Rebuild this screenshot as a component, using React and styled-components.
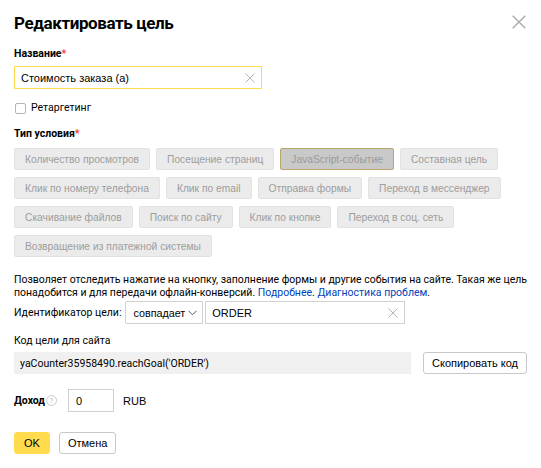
import React from "react";
import styled, { createGlobalStyle } from "styled-components";

const GlobalStyle = createGlobalStyle`
  body {
    margin: 0;
    background: #fff;
    font-family: Roboto, "Noto Sans", sans-serif;
    color: #000;
  }
`;

const Dialog = styled.div`
  position: relative;
  width: 541px;
  height: 468px;
  box-sizing: border-box;
  padding: 12px 14px 0;
`;

const Title = styled.h2`
  margin: 0;
  font-size: 17px;
  line-height: 22px;
  font-weight: 700;
  letter-spacing: -0.4px;
`;

const Close = styled.button`
  position: absolute;
  top: 15px;
  right: 15px;
  width: 14px;
  height: 14px;
  padding: 0;
  border: 0;
  background: none;
  display: flex;
`;

const Label = styled.div`
  margin-top: ${(p) => p.$top || 0}px;
  font-size: 10.5px;
  line-height: 14px;
  font-weight: ${(p) => (p.$bold ? 700 : 400)};
`;

const Req = styled.span`
  color: #f33;
`;

const TextInput = styled.div`
  margin-top: ${(p) => p.$top || 0}px;
  width: ${(p) => p.$width}px;
  height: 23px;
  box-sizing: border-box;
  border: 1px solid ${(p) => (p.$focused ? "#ffdb4d" : "#d0d0d0")};
  display: flex;
  align-items: center;
  padding: 0 6px;
  font-family: "Liberation Sans", Arial, sans-serif;
  font-size: 11px;
  background: #fff;
`;

const InputText = styled.span`
  flex: 1;
  white-space: nowrap;
`;

const Check = styled.label`
  margin-top: 12px;
  display: flex;
  align-items: center;
  gap: 5px;
  font-size: 10.5px;
  line-height: 14px;
`;

const Box = styled.span`
  width: 9px;
  height: 9px;
  border: 1px solid #b5b5b5;
  border-radius: 2px;
  margin-left: 1px;
`;

const Types = styled.div`
  margin-top: 7px;
  display: flex;
  flex-direction: column;
  gap: 7px;
`;

const TypeRow = styled.div`
  display: flex;
  gap: 6px;
`;

const TypeButton = styled.div`
  height: 22px;
  box-sizing: border-box;
  padding: 0 10px;
  display: flex;
  align-items: center;
  border-radius: 2px;
  border: 1px solid ${(p) => (p.$active ? "#b9a66c" : "#e2e2e2")};
  background: ${(p) => (p.$active ? "#c9c9c9" : "#ebebeb")};
  color: ${(p) => (p.$active ? "#9a9a9a" : "#9d9d9d")};
  font-family: "Liberation Sans", Arial, sans-serif;
  font-size: 10.25px;
  white-space: nowrap;
`;

const Description = styled.p`
  margin: 16px 0 0;
  font-size: 10.5px;
  line-height: 13px;
`;

const Link = styled.a`
  color: #04b;
  text-decoration: none;
`;

const FieldRow = styled.div`
  margin-top: ${(p) => p.$top || 0}px;
  display: flex;
  align-items: center;
  gap: ${(p) => p.$gap || 0}px;
  font-size: 10.5px;
`;

const Select = styled.div`
  margin-left: 4px;
  height: 23px;
  box-sizing: border-box;
  border: 1px solid #d0d0d0;
  border-radius: 2px 0 0 2px;
  display: flex;
  align-items: center;
  gap: 3px;
  padding: 0 5px 0 7px;
  font-family: "Liberation Sans", Arial, sans-serif;
  font-size: 10.75px;
  margin-right: 2px;
`;

const Code = styled.div`
  flex: 1;
  height: 22px;
  background: #f0f0f0;
  display: flex;
  align-items: center;
  padding: 0 6px;
  font-size: 10.5px;
`;

const Button = styled.button`
  height: 22px;
  box-sizing: border-box;
  padding: 0 ${(p) => p.$pad || 10}px;
  border-radius: 3px;
  border: 1px solid ${(p) => (p.$primary ? "#ffdb4d" : "#c8c8c8")};
  background: ${(p) => (p.$primary ? "#ffdb4d" : "#fff")};
  font-family: "Liberation Sans", Arial, sans-serif;
  font-size: 11px;
  color: #000;
`;

const Help = styled.span`
  display: inline-flex;
  width: 9px;
  height: 9px;
  border: 1px solid #ccc;
  border-radius: 50%;
  align-items: center;
  justify-content: center;
  font-size: 7px;
  color: #bbb;
  margin-left: 1px;
  margin-right: 11px;
`;

const Income = styled.div`
  width: 46px;
  height: 23px;
  box-sizing: border-box;
  border: 1px solid #d0d0d0;
  display: flex;
  align-items: center;
  padding: 0 7px;
  font-family: "Liberation Sans", Arial, sans-serif;
  font-size: 11px;
`;

const Currency = styled.span`
  margin-left: 9px;
  font-family: "Liberation Sans", Arial, sans-serif;
  font-size: 11px;
`;

const Cross = ({ size = 10, color = "#b5b5b5" }) => (
  <svg width={size} height={size} viewBox="0 0 10 10">
    <path d="M0.5 0.5L9.5 9.5M9.5 0.5L0.5 9.5" stroke={color} strokeWidth="1" />
  </svg>
);

const Chevron = () => (
  <svg width="9" height="6" viewBox="0 0 9 6">
    <path d="M0.5 0.8L4.5 4.8L8.5 0.8" stroke="#555" strokeWidth="1" fill="none" />
  </svg>
);

const goalTypes = [
  ["Количество просмотров", "Посещение страниц", "JavaScript-событие", "Составная цель"],
  ["Клик по номеру телефона", "Клик по email", "Отправка формы", "Переход в мессенджер"],
  ["Скачивание файлов", "Поиск по сайту", "Клик по кнопке", "Переход в соц. сеть"],
  ["Возвращение из платежной системы"],
];

export default function App() {
  return (
    <>
      <GlobalStyle />
      <Dialog>
        <Title>Редактировать цель</Title>
        <Close>
          <Cross size={14} color="#aaa" />
        </Close>

        <Label $bold $top={13}>
          Название<Req>*</Req>
        </Label>
        <TextInput $top={5} $width={248} $focused>
          <InputText>Стоимость заказа (а)</InputText>
          <Cross />
        </TextInput>

        <Check>
          <Box />
          Ретаргетинг
        </Check>

        <Label $bold $top={12}>
          Тип условия<Req>*</Req>
        </Label>
        <Types>
          {goalTypes.map((row, i) => (
            <TypeRow key={i}>
              {row.map((t) => (
                <TypeButton key={t} $active={t === "JavaScript-событие"}>
                  {t}
                </TypeButton>
              ))}
            </TypeRow>
          ))}
        </Types>

        <Description>
          Позволяет отследить нажатие на кнопку, заполнение формы и другие события на сайте. Такая же цель
          понадобится и для передачи офлайн-конверсий. <Link href="#">Подробнее</Link>.{" "}
          <Link href="#">Диагностика проблем</Link>.
        </Description>

        <FieldRow $top={2}>
          Идентификатор цели:
          <Select>
            совпадает <Chevron />
          </Select>
          <TextInput $width={200}>
            <InputText>ORDER</InputText>
            <Cross />
          </TextInput>
        </FieldRow>

        <Label $top={10}>Код цели для сайта</Label>
        <FieldRow $top={4} $gap={12}>
          <Code>yaCounter35958490.reachGoal('ORDER')</Code>
          <Button $pad={8}>Скопировать код</Button>
        </FieldRow>

        <FieldRow $top={15}>
          <b>Доход</b>
          <Help>?</Help>
          <Income>0</Income>
          <Currency>RUB</Currency>
        </FieldRow>

        <FieldRow $top={20} $gap={9}>
          <Button $primary $pad={9}>OK</Button>
          <Button $pad={8}>Отмена</Button>
        </FieldRow>
      </Dialog>
    </>
  );
}
